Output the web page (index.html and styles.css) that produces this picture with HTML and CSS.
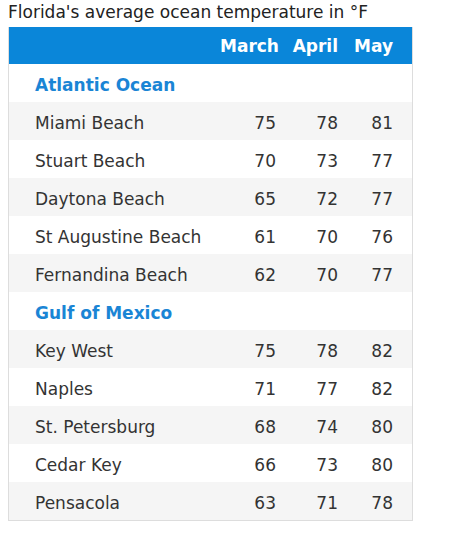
FILE: index.html
```html
<!DOCTYPE html>
<html lang="en">
<head>
<meta charset="utf-8">
<title>Florida ocean temperatures</title>
<link rel="stylesheet" href="styles.css">
</head>
<body>
<div class="caption">Florida's average ocean temperature in °F</div>
<table class="temps">
  <thead>
    <tr><th class="name"></th><th class="mar">March</th><th class="apr">April</th><th class="may">May</th></tr>
  </thead>
  <tbody>
    <tr class="group"><td class="name">Atlantic Ocean</td><td class="mar"></td><td class="apr"></td><td class="may"></td></tr>
    <tr><td class="name">Miami Beach</td><td class="mar">75</td><td class="apr">78</td><td class="may">81</td></tr>
    <tr><td class="name">Stuart Beach</td><td class="mar">70</td><td class="apr">73</td><td class="may">77</td></tr>
    <tr><td class="name">Daytona Beach</td><td class="mar">65</td><td class="apr">72</td><td class="may">77</td></tr>
    <tr><td class="name">St Augustine Beach</td><td class="mar">61</td><td class="apr">70</td><td class="may">76</td></tr>
    <tr><td class="name">Fernandina Beach</td><td class="mar">62</td><td class="apr">70</td><td class="may">77</td></tr>
    <tr class="group"><td class="name">Gulf of Mexico</td><td class="mar"></td><td class="apr"></td><td class="may"></td></tr>
    <tr><td class="name">Key West</td><td class="mar">75</td><td class="apr">78</td><td class="may">82</td></tr>
    <tr><td class="name">Naples</td><td class="mar">71</td><td class="apr">77</td><td class="may">82</td></tr>
    <tr><td class="name">St. Petersburg</td><td class="mar">68</td><td class="apr">74</td><td class="may">80</td></tr>
    <tr><td class="name">Cedar Key</td><td class="mar">66</td><td class="apr">73</td><td class="may">80</td></tr>
    <tr><td class="name">Pensacola</td><td class="mar">63</td><td class="apr">71</td><td class="may">78</td></tr>
  </tbody>
</table>
</body>
</html>
```
FILE: styles.css
```css
html, body {
  background: #ffffff;
}
body {
  margin: 0;
  padding: 0 8px;
  font-family: "DejaVu Sans", Verdana, sans-serif;
  color: #222222;
}
.caption {
  font-size: 17px;
  line-height: 25px;
  height: 27px;
  color: #222222;
}
.temps {
  border-collapse: collapse;
  table-layout: fixed;
  width: 405px;
  border: 1px solid #dddddd;
  border-top: none;
  font-size: 17px;
}
.temps th, .temps td {
  padding: 3px 0 0 0;
  text-align: right;
  height: 35px;
  white-space: nowrap;
  vertical-align: middle;
}
.temps thead th {
  background: #0a86d9;
  color: #ffffff;
  font-weight: bold;
  height: 36px;
  padding-top: 1px;
}
.temps .name {
  text-align: left;
  padding-left: 26px;
}
.temps .mar { width: 56px; padding-right: 10px; }
.temps .apr { width: 52px; padding-right: 10px; }
.temps .may { width: 45px; padding-right: 19px; }
.temps tbody tr {
  background: #ffffff;
  color: #333333;
}
.temps tbody tr:nth-child(even) {
  background: #f5f5f5;
}
.temps tr.group td {
  color: #1a85d5;
  font-weight: bold;
}
```
